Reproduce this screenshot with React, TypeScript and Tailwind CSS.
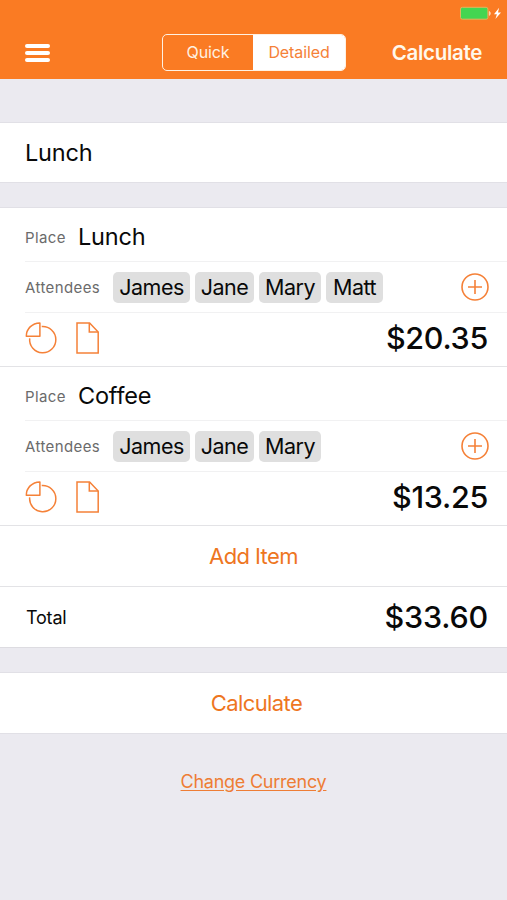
import React, { useState } from 'react';

type Item = {
  id: number;
  place: string;
  attendees: { name: string; width: string }[];
  amount: string;
};

const james = { name: 'James', width: 'w-[77px]' };
const jane = { name: 'Jane', width: 'w-[59px]' };
const mary = { name: 'Mary', width: 'w-[62px]' };
const matt = { name: 'Matt', width: 'w-[57px]' };

const items: Item[] = [
  { id: 1, place: 'Lunch', attendees: [james, jane, mary, matt], amount: '$20.35' },
  { id: 2, place: 'Coffee', attendees: [james, jane, mary], amount: '$13.25' },
];

const BatteryIcon = () => (
  <svg width="42" height="14" viewBox="0 0 42 14" fill="none">
    <rect x="0.5" y="1.3" width="27.4" height="11.9" rx="1.8" fill="#43d551" stroke="#e3b35c" />
    <path d="M29.3 5.4v4c1.4-.4 1.4-3.6 0-4z" fill="#ffe3c4" stroke="#ffe3c4" strokeWidth=".6" />
    <path d="M39.1 1.8 34 8.3h2.9l-1.5 4.7L41 6.5h-3z" fill="#fff" />
  </svg>
);

const SplitIcon = () => (
  <svg width="32" height="32" viewBox="0 0 32 32" fill="none" stroke="#f58138" strokeWidth="1.5">
    <path d="M14.9.9v13.4H1.3C1.3 6.8 7 1.1 14.9.9z" strokeLinejoin="round" />
    <path d="M16.7 4.6A13.1 13.1 0 1 1 4.7 16.3" />
  </svg>
);

const NoteIcon = () => (
  <svg width="24" height="32" viewBox="0 0 24 32" fill="none" stroke="#f58138" strokeWidth="1.5">
    <path d="M1 .9h12.6l8.6 9.2v21H1z" />
    <path d="M13.3.9v9.2h8.9" />
  </svg>
);

const AddIcon = () => (
  <svg width="28" height="28" viewBox="0 0 28 28" fill="none" stroke="#f58138" strokeWidth="1.6">
    <circle cx="14" cy="14" r="13" />
    <path d="M14 7v14M7 14h14" />
  </svg>
);

const ItemCard = ({ item }: { item: Item }) => (
  <div className="border-b border-[#e3e3e6] bg-white pl-[25px]">
    <div className="flex h-[54px] items-center border-b border-[#f1f1f2] pt-[5px]">
      <span className="w-[53px] text-[15px] tracking-[0.4px] text-[#6b6b6b]">Place</span>
      <span className="text-[23.5px] tracking-[-0.2px]">{item.place}</span>
    </div>
    <div className="flex h-[51px] items-center border-b border-[#f1f1f2] pr-[18px]">
      <span className="w-[88px] text-[15px] tracking-[0.4px] text-[#6b6b6b]">Attendees</span>
      <div className="flex flex-1 gap-[5px]">
        {item.attendees.map(({ name, width }) => (
          <span
            key={name}
            className={`flex h-[31px] items-center justify-center rounded-[5px] bg-[#dfdfdf] pt-0.5 text-[21.5px] tracking-[-0.5px] ${width}`}
          >
            {name}
          </span>
        ))}
      </div>
      <button type="button" aria-label="Add attendee">
        <AddIcon />
      </button>
    </div>
    <div className="flex h-[53px] items-center pr-[19px] pb-1">
      <SplitIcon />
      <div className="ml-[19px]">
        <NoteIcon />
      </div>
      <span className="ml-auto pt-0.5 text-[30.5px] font-medium tracking-[-0.3px]">{item.amount}</span>
    </div>
  </div>
);

const App = () => {
  const [mode, setMode] = useState<'quick' | 'detailed'>('detailed');

  return (
    <div className="min-h-screen w-full bg-[#ebeaf0] font-['Inter',sans-serif] leading-none text-[#090909]">
      <header className="h-[79px] bg-[#fa7b23] text-white">
        <div className="flex h-[34px] justify-end pt-[6px] pr-[5px]">
          <BatteryIcon />
        </div>
        <div className="flex h-[37px] items-center pr-[25px] pl-[25px]">
          <button type="button" aria-label="Menu" className="flex w-[25px] flex-col gap-[3px]">
            <span className="h-1 rounded-full bg-white" />
            <span className="h-1 rounded-full bg-white" />
            <span className="h-1 rounded-full bg-white" />
          </button>
          <div className="ml-[112px] flex h-[37px] w-[184px] overflow-hidden rounded-[5px] border border-[#fff1e2] text-[16px] tracking-[-0.1px]">
            <button
              type="button"
              onClick={() => setMode('quick')}
              className={`w-[90px] pb-0.5 ${mode === 'quick' ? 'bg-white text-[#f58138]' : 'text-[#fff1e2]'}`}
            >
              Quick
            </button>
            <button
              type="button"
              onClick={() => setMode('detailed')}
              className={`flex-1 pb-0.5 ${mode === 'detailed' ? 'bg-white text-[#f58138]' : 'text-[#fff1e2]'}`}
            >
              Detailed
            </button>
          </div>
          <button type="button" className="ml-auto pt-px text-[20.5px] font-semibold tracking-[-0.3px] text-[#fff8ec]">
            Calculate
          </button>
        </div>
      </header>

      <main>
        <div className="mt-[43px] flex h-[61px] items-center border-y border-[#e1e0e6] bg-white pl-[25px] text-[23.5px] tracking-[-0.2px]">
          Lunch
        </div>

        <section className="mt-[24px] border-t border-[#e1e0e6]">
          {items.map((item) => (
            <ItemCard key={item.id} item={item} />
          ))}
          <button
            type="button"
            className="flex h-[61px] w-full items-center justify-center border-b border-[#e3e3e6] bg-white text-[22px] tracking-[-0.6px] text-[#ee761f]"
          >
            Add Item
          </button>
          <div className="flex h-[61px] items-center justify-between border-b border-[#dddce1] bg-white pr-[19px] pl-[26px]">
            <span className="pt-0.5 text-[18px] tracking-[-0.2px]">Total</span>
            <span className="text-[30.5px] font-medium tracking-[-0.2px]">$33.60</span>
          </div>
        </section>

        <button
          type="button"
          className="mt-[24px] flex h-[62px] w-full items-center justify-center border-y border-[#e1e0e6] bg-white pl-[6px] text-[22px] tracking-[-0.6px] text-[#ee761f]"
        >
          Calculate
        </button>

        <div className="flex justify-center pt-[39px]">
          <button type="button" className="text-[18px] tracking-[-0.25px] text-[#ee7d35] underline underline-offset-2">
            Change Currency
          </button>
        </div>
      </main>
    </div>
  );
};

export default App;
